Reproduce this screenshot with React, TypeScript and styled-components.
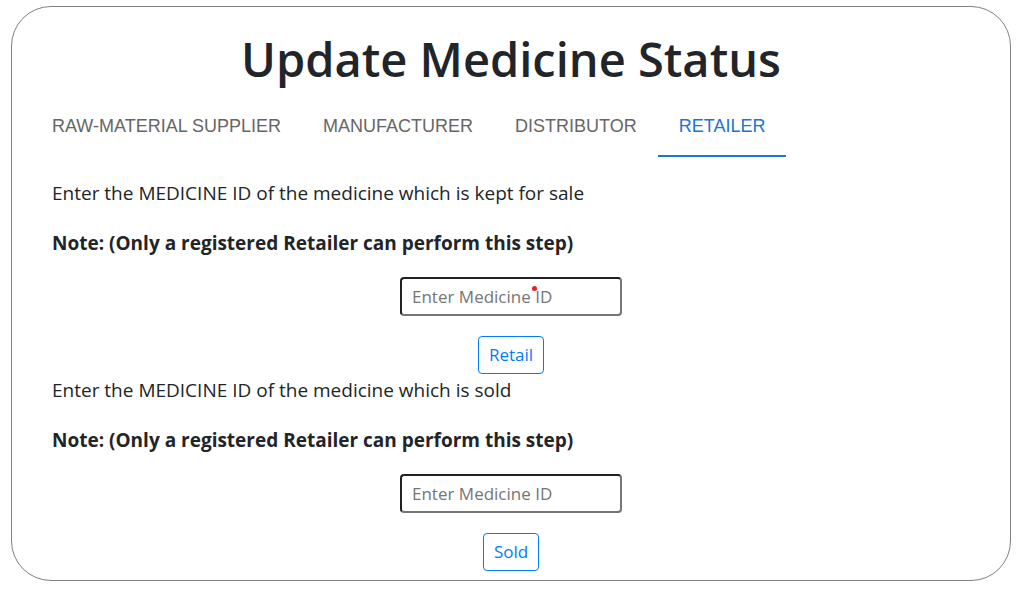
import React, { useState } from "react";
import styled, { createGlobalStyle } from "styled-components";

const GlobalStyle = createGlobalStyle`
  *, *::before, *::after { box-sizing: border-box; }
  body {
    margin: 0;
    background: #fff;
    color: #212529;
    font-family: "Segoe UI", "Open Sans", "Noto Sans", sans-serif;
    font-size: 19px;
    line-height: 32px;
  }
`;

const Card = styled.main`
  margin: 6px 11px 9px;
  padding: 18px 40px 9px;
  border: 1px solid #808080;
  border-radius: 40px;
`;

const Title = styled.h1`
  margin: 0 0 8px;
  font-size: 47px;
  font-weight: 600;
  line-height: 68px;
  text-align: center;
`;

const Tabs = styled.div`
  display: flex;
  margin: 0 -21px 20px;
`;

const Tab = styled.button<{ $active: boolean }>`
  height: 56px;
  padding: 0 21px 4px;
  border: 0;
  border-bottom: 2px solid ${(p) => (p.$active ? "#1976d2" : "transparent")};
  background: none;
  color: ${(p) => (p.$active ? "#1976d2" : "#666")};
  font-family: "Liberation Sans", Arial, sans-serif;
  font-size: 18px;
  text-transform: uppercase;
  cursor: pointer;
`;

const Form = styled.form`
  display: flex;
  flex-direction: column;
  align-items: center;
`;

const Label = styled.label`
  align-self: stretch;
  margin-bottom: 18px;
`;

const Note = styled.strong`
  align-self: stretch;
  margin-bottom: 18px;
  font-weight: 700;
`;

const Field = styled.div`
  position: relative;
  display: flex;
  margin-bottom: 20px;
`;

const IdInput = styled.input`
  width: 222px;
  height: 39px;
  padding: 0 10px;
  border: 2px inset #767676;
  border-radius: 4px;
  font: inherit;
  font-size: 17px;
  &::placeholder { color: #757575; }
`;

const PointerDot = styled.span`
  position: absolute;
  top: 9px;
  left: 132px;
  width: 5px;
  height: 5px;
  border-radius: 50%;
  background: #ed1c24;
  pointer-events: none;
`;

const Submit = styled.button`
  height: 38px;
  padding: 0 10px;
  border: 1px solid #007bff;
  border-radius: 4px;
  background: #fff;
  color: #007bff;
  font: inherit;
  font-size: 17px;
  cursor: pointer;
`;

const tabs = ["Raw-Material Supplier", "Manufacturer", "Distributor", "Retailer"];

const steps = [
  { id: "retail", text: "Enter the MEDICINE ID of the medicine which is kept for sale", action: "Retail", marked: true },
  { id: "sold", text: "Enter the MEDICINE ID of the medicine which is sold", action: "Sold", marked: false },
];

export default function App() {
  const [active, setActive] = useState("Retailer");
  return (
    <>
      <GlobalStyle />
      <Card>
        <Title>Update Medicine Status</Title>
        <Tabs role="tablist">
          {tabs.map((t) => (
            <Tab key={t} type="button" role="tab" aria-selected={t === active} $active={t === active} onClick={() => setActive(t)}>
              {t}
            </Tab>
          ))}
        </Tabs>
        {steps.map((s) => (
          <Form key={s.id} onSubmit={(e) => e.preventDefault()}>
            <Label htmlFor={s.id}>{s.text}</Label>
            <Note>Note: (Only a registered Retailer can perform this step)</Note>
            <Field>
              <IdInput id={s.id} placeholder="Enter Medicine ID" />
              {s.marked && <PointerDot />}
            </Field>
            <Submit type="submit">{s.action}</Submit>
          </Form>
        ))}
      </Card>
    </>
  );
}
